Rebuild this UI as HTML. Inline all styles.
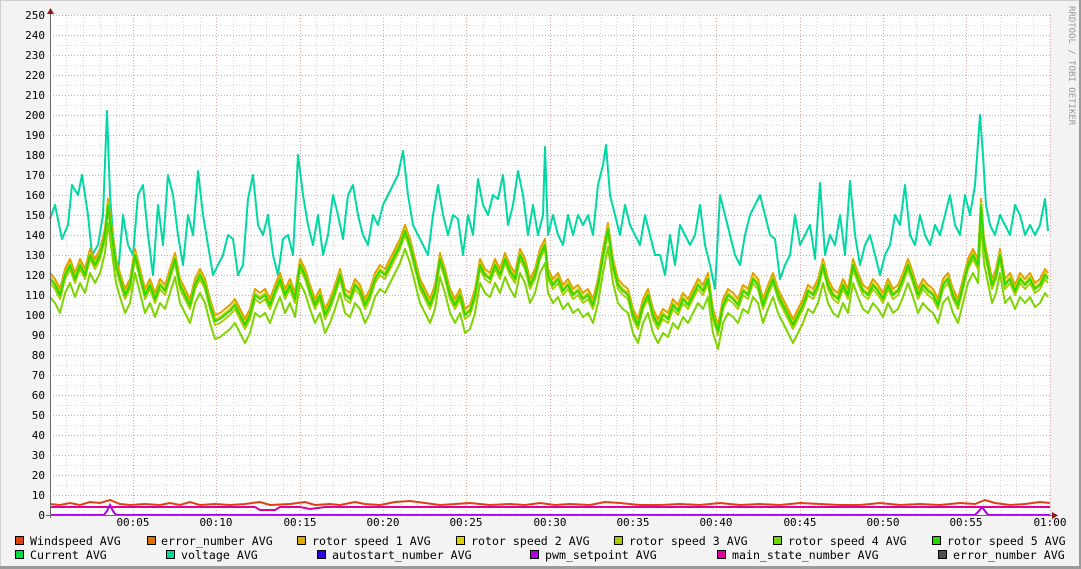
<!DOCTYPE html>
<html><head><meta charset="utf-8"><style>
html,body{margin:0;padding:0;background:#f3f3f3;}
svg{display:block;}
text{font-family:"DejaVu Sans Mono","Liberation Mono",monospace;}
</style></head><body>
<svg width="1081" height="569" viewBox="0 0 1081 569" xmlns="http://www.w3.org/2000/svg">
<rect x="0" y="0" width="1081" height="569" fill="#f3f3f3"/>
<line x1="0" y1="0.5" x2="1081" y2="0.5" stroke="#d0d0d0"/>
<line x1="0.5" y1="0" x2="0.5" y2="569" stroke="#d0d0d0"/>
<line x1="0" y1="567.5" x2="1081" y2="567.5" stroke="#9a9a9a" stroke-width="3"/>
<line x1="1080" y1="0" x2="1080" y2="569" stroke="#9a9a9a" stroke-width="2"/>
<rect x="50" y="15" width="1000" height="500" fill="#ffffff"/>
<g stroke-dasharray="1,2" stroke-width="1">
<g stroke="#d8d8d8">
<path d="M50 25.5H1050M50 45.5H1050M50 65.5H1050M50 85.5H1050M50 105.5H1050M50 125.5H1050M50 145.5H1050M50 165.5H1050M50 185.5H1050M50 205.5H1050M50 225.5H1050M50 245.5H1050M50 265.5H1050M50 285.5H1050M50 305.5H1050M50 325.5H1050M50 345.5H1050M50 365.5H1050M50 385.5H1050M50 405.5H1050M50 425.5H1050M50 445.5H1050M50 465.5H1050M50 485.5H1050M50 505.5H1050"/>
<path d="M66.5 15V515M83.5 15V515M100.5 15V515M116.5 15V515M150.5 15V515M166.5 15V515M183.5 15V515M200.5 15V515M233.5 15V515M250.5 15V515M266.5 15V515M283.5 15V515M316.5 15V515M333.5 15V515M350.5 15V515M366.5 15V515M400.5 15V515M416.5 15V515M433.5 15V515M450.5 15V515M483.5 15V515M500.5 15V515M516.5 15V515M533.5 15V515M566.5 15V515M583.5 15V515M600.5 15V515M616.5 15V515M650.5 15V515M666.5 15V515M683.5 15V515M700.5 15V515M733.5 15V515M750.5 15V515M766.5 15V515M783.5 15V515M816.5 15V515M833.5 15V515M850.5 15V515M866.5 15V515M900.5 15V515M916.5 15V515M933.5 15V515M950.5 15V515M983.5 15V515M1000.5 15V515M1016.5 15V515M1033.5 15V515"/>
</g>
<g stroke="#e2a0a0">
<path d="M50 15.5H1050M50 35.5H1050M50 55.5H1050M50 75.5H1050M50 95.5H1050M50 115.5H1050M50 135.5H1050M50 155.5H1050M50 175.5H1050M50 195.5H1050M50 215.5H1050M50 235.5H1050M50 255.5H1050M50 275.5H1050M50 295.5H1050M50 315.5H1050M50 335.5H1050M50 355.5H1050M50 375.5H1050M50 395.5H1050M50 415.5H1050M50 435.5H1050M50 455.5H1050M50 475.5H1050M50 495.5H1050"/>
<path d="M133.5 15V515M216.5 15V515M300.5 15V515M383.5 15V515M466.5 15V515M550.5 15V515M633.5 15V515M716.5 15V515M800.5 15V515M883.5 15V515M966.5 15V515M1050.5 15V515"/>
</g>
</g>
<defs>
<polyline id="rot" fill="none" stroke-width="2" vector-effect="non-scaling-stroke" stroke-linejoin="round" points="50,118 55,115 60,110 65,120 70,125 75,118 80,125 85,120 90,130 95,125 100,130 105,140 108,155 112,140 116,125 120,118 125,110 130,115 135,130 140,120 145,110 150,115 155,108 160,115 165,112 170,120 175,128 180,115 185,110 190,105 195,115 200,120 205,115 210,105 215,97 220,98 225,100 230,102 235,105 240,100 245,95 250,100 255,110 260,108 265,110 270,105 275,112 280,118 285,110 290,115 295,108 300,125 305,120 310,112 315,105 320,110 325,100 330,105 335,112 340,120 345,110 350,108 355,115 360,112 365,105 370,110 375,118 380,122 385,120 390,125 395,130 400,135 405,142 410,135 415,125 420,115 425,110 430,105 435,112 440,128 445,120 450,110 455,105 460,110 465,100 470,102 475,110 480,125 485,120 490,118 495,125 500,120 505,128 510,122 515,118 520,130 525,125 530,115 535,120 540,130 545,135 548,120 553,115 558,118 563,112 568,115 573,110 578,112 583,108 588,110 593,105 598,115 603,130 608,143 613,125 618,115 623,112 628,110 633,100 638,95 643,105 648,110 653,100 658,95 663,100 668,98 673,105 678,102 683,108 688,105 693,110 698,115 703,112 708,118 713,100 718,92 723,105 728,110 733,108 738,105 743,112 748,110 753,118 758,115 763,105 768,112 773,118 778,110 783,105 788,100 793,95 798,100 803,105 808,112 813,110 818,115 823,125 828,115 833,110 838,108 843,115 848,110 853,125 858,118 863,112 868,110 873,115 878,112 883,108 888,115 893,110 898,112 903,118 908,125 913,118 918,110 923,115 928,112 933,110 938,105 943,115 948,118 953,110 958,105 963,115 968,125 973,130 978,125 981,155 984,135 988,125 992,115 996,120 1000,130 1005,115 1010,118 1015,112 1020,118 1025,115 1030,118 1035,113 1040,115 1045,120 1048,118"/>
</defs>
<g transform="translate(0,515) scale(1,-2)">
<polyline fill="none" stroke="#00d8a4" stroke-width="2" vector-effect="non-scaling-stroke" stroke-linejoin="round" points="50,148 55,155 62,138 68,145 72,165 78,160 82,170 88,150 92,130 98,135 103,150 107,202 110,160 113,140 118,120 123,150 128,135 133,130 138,160 143,165 148,140 153,120 158,155 163,135 168,170 173,160 178,140 183,125 188,150 193,140 198,172 203,150 208,135 213,120 218,125 223,130 228,140 233,138 238,120 243,125 248,158 253,170 258,145 263,140 268,150 273,130 278,120 283,138 288,140 293,130 298,180 303,160 308,145 313,135 318,150 323,130 328,140 333,160 338,150 343,138 348,160 353,165 358,150 363,140 368,135 373,150 378,145 383,155 388,160 393,165 398,170 403,182 408,160 413,145 418,140 423,135 428,130 433,150 438,165 443,150 448,140 453,150 458,148 463,130 468,150 473,140 478,168 483,155 488,150 493,160 498,158 503,170 508,145 513,155 518,172 523,160 528,140 533,155 538,140 543,150 545,184 548,140 553,150 558,140 563,135 568,150 573,140 578,150 583,145 588,150 593,140 598,165 603,175 606,185 610,160 615,150 620,140 625,155 630,145 635,140 640,135 645,150 650,140 655,130 660,130 665,120 670,140 675,125 680,145 685,140 690,135 695,140 700,155 705,135 710,125 715,113 720,160 725,150 730,140 735,130 740,125 745,140 750,150 755,155 760,160 765,150 770,140 775,138 780,118 785,125 790,130 795,150 800,135 805,140 810,145 815,128 820,166 825,130 830,140 835,135 840,150 845,130 850,167 855,140 860,125 865,135 870,140 875,130 880,120 885,130 890,135 895,150 900,145 905,165 910,140 915,135 920,150 925,140 930,135 935,145 940,140 945,150 950,160 955,145 960,140 965,160 970,150 975,165 980,200 983,180 986,155 990,145 995,140 1000,150 1005,145 1010,140 1015,155 1020,150 1025,140 1030,145 1035,140 1040,145 1045,158 1048,142"/>
<use href="#rot" stroke="#7ed400" transform="translate(0,-9)"/>
<use href="#rot" stroke="#e0a000" transform="translate(0,3)"/>
<use href="#rot" stroke="#d8d000" transform="translate(0,1)"/>
<use href="#rot" stroke="#a8d000" transform="translate(0,-2)"/>
<use href="#rot" stroke="#2ed800" transform="translate(0,0)"/>
<polyline fill="none" stroke="#e04010" stroke-width="2" vector-effect="non-scaling-stroke" points="50,5.5 60,5 70,6 80,5 90,6.5 100,6 110,7.5 120,5.5 130,5 145,5.5 160,5 170,6 180,5 190,6.5 200,5 215,5.5 230,5 245,5.5 260,6.5 270,5 290,5.5 305,6.5 315,5 330,5.5 340,5 355,6.5 365,5.5 380,5 395,6.5 410,7 425,6 440,5 455,5.5 470,6 490,5 510,5.5 525,5 540,6 555,5 570,5.5 590,5 605,6.5 620,6 640,5 660,5 680,5.5 700,5 720,6 740,5 760,5.5 780,5 800,6 820,5.5 840,5 860,5 880,6 900,5 920,5.5 940,5 960,6 975,5.5 985,7.5 995,6 1010,5 1025,5.5 1040,6.5 1050,6"/>
<polyline fill="none" stroke="#e000a0" stroke-width="2" vector-effect="non-scaling-stroke" points="50,4 255,4 260,2.5 275,2.5 280,4 300,4 310,3 325,4 1050,4"/>
<polyline fill="none" stroke="#b000e0" stroke-width="2" vector-effect="non-scaling-stroke" points="50,0 104,0 107,2 110,5 113,2 116,0 975,0 979,2 982,4 985,2 988,0 1050,0"/>
</g>
<line x1="50.5" y1="10" x2="50.5" y2="518" stroke="#666"/>
<line x1="46" y1="515.5" x2="1053" y2="515.5" stroke="#666"/>
<path d="M47 14 L50.5 8 L54 14Z" fill="#8b1a1a"/>
<path d="M1052 512 L1058 515.5 L1052 519Z" fill="#8b1a1a"/>
<g font-size="11" fill="#000" text-anchor="end">
<text x="45" y="19">250</text><text x="45" y="39">240</text><text x="45" y="59">230</text><text x="45" y="79">220</text><text x="45" y="99">210</text><text x="45" y="119">200</text><text x="45" y="139">190</text><text x="45" y="159">180</text><text x="45" y="179">170</text><text x="45" y="199">160</text><text x="45" y="219">150</text><text x="45" y="239">140</text><text x="45" y="259">130</text><text x="45" y="279">120</text><text x="45" y="299">110</text><text x="45" y="319">100</text><text x="45" y="339">90</text><text x="45" y="359">80</text><text x="45" y="379">70</text><text x="45" y="399">60</text><text x="45" y="419">50</text><text x="45" y="439">40</text><text x="45" y="459">30</text><text x="45" y="479">20</text><text x="45" y="499">10</text><text x="45" y="519">0</text>
</g>
<g font-size="11" fill="#000" text-anchor="middle">
<text x="133" y="526">00:05</text><text x="216" y="526">00:10</text><text x="300" y="526">00:15</text><text x="383" y="526">00:20</text><text x="466" y="526">00:25</text><text x="550" y="526">00:30</text><text x="633" y="526">00:35</text><text x="716" y="526">00:40</text><text x="800" y="526">00:45</text><text x="883" y="526">00:50</text><text x="966" y="526">00:55</text><text x="1050" y="526">01:00</text>
</g>
<text transform="translate(1069,6) rotate(90)" font-size="9" fill="#999">RRDTOOL / TOBI OETIKER</text>
<g font-size="11.6" fill="#000" stroke="#000" stroke-width="0">
<g stroke="#000" stroke-width="1">
<rect x="15.5" y="536.5" width="8" height="8" fill="#e04010"/>
<rect x="147.5" y="536.5" width="8" height="8" fill="#e07000"/>
<rect x="297.5" y="536.5" width="8" height="8" fill="#e0a800"/>
<rect x="456.5" y="536.5" width="8" height="8" fill="#dcd400"/>
<rect x="614.5" y="536.5" width="8" height="8" fill="#a8d000"/>
<rect x="773.5" y="536.5" width="8" height="8" fill="#70d800"/>
<rect x="932.5" y="536.5" width="8" height="8" fill="#28d800"/>
<rect x="15.5" y="550.5" width="8" height="8" fill="#00e040"/>
<rect x="166.5" y="550.5" width="8" height="8" fill="#00d8a4"/>
<rect x="317.5" y="550.5" width="8" height="8" fill="#3000e0"/>
<rect x="530.5" y="550.5" width="8" height="8" fill="#b000e0"/>
<rect x="717.5" y="550.5" width="8" height="8" fill="#e000a0"/>
<rect x="938.5" y="550.5" width="8" height="8" fill="#505050"/>
</g>
<text x="30" y="545">Windspeed AVG</text>
<text x="161" y="545">error_number AVG</text>
<text x="312" y="545">rotor speed 1 AVG</text>
<text x="471" y="545">rotor speed 2 AVG</text>
<text x="629" y="545">rotor speed 3 AVG</text>
<text x="788" y="545">rotor speed 4 AVG</text>
<text x="947" y="545">rotor speed 5 AVG</text>
<text x="30" y="559">Current AVG</text>
<text x="181" y="559">voltage AVG</text>
<text x="332" y="559">autostart_number AVG</text>
<text x="545" y="559">pwm_setpoint AVG</text>
<text x="732" y="559">main_state_number AVG</text>
<text x="953" y="559">error_number AVG</text>
</g>
</svg>
</body></html>
